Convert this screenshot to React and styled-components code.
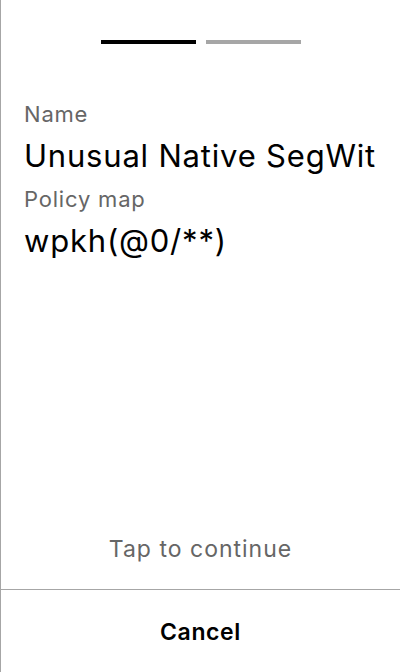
import React from 'react';
import styled, { createGlobalStyle } from 'styled-components';

const GlobalStyle = createGlobalStyle`
  html, body {
    margin: 0;
    padding: 0;
    background: #fff;
  }
  body {
    font-family: Inter, "Noto Sans", sans-serif;
  }
`;

const Screen = styled.div`
  width: 400px;
  height: 672px;
  box-sizing: border-box;
  border-left: 1px solid #a6a6a6;
  display: flex;
  flex-direction: column;
  background: #fff;
`;

const Progress = styled.div`
  display: flex;
  justify-content: center;
  gap: 10px;
  padding-top: 40px;
`;

const Step = styled.div`
  width: 95px;
  height: 4px;
  background: ${(p) => (p.$active ? '#000' : '#a6a6a6')};
`;

const Content = styled.div`
  flex: 1;
  display: flex;
  flex-direction: column;
  padding: 56px 12px 0 23px;
`;

const Label = styled.div`
  font-size: 22px;
  line-height: 28px;
  letter-spacing: 0.8px;
  color: #666;
`;

const Value = styled.div`
  font-size: 31px;
  line-height: 36px;
  letter-spacing: 0.8px;
  color: #000;
  white-space: nowrap;
  margin: 10px 0 11px;
`;

const TapHint = styled.div`
  text-align: center;
  font-size: 23px;
  line-height: 28px;
  letter-spacing: 1px;
  color: #666;
  padding-bottom: 26px;
`;

const Footer = styled.div`
  border-top: 1px solid #a6a6a6;
  height: 83px;
  box-sizing: border-box;
  padding-top: 2px;
  display: flex;
  align-items: center;
  justify-content: center;
  font-size: 23px;
  font-weight: 600;
  letter-spacing: 0.6px;
  color: #000;
`;

export default function App() {
  return (
    <>
      <GlobalStyle />
      <Screen>
        <Progress>
          <Step $active />
          <Step />
        </Progress>
        <Content>
          <Label>Name</Label>
          <Value>Unusual Native SegWit</Value>
          <Label>Policy map</Label>
          <Value>wpkh(@0/**)</Value>
        </Content>
        <TapHint>Tap to continue</TapHint>
        <Footer>Cancel</Footer>
      </Screen>
    </>
  );
}
